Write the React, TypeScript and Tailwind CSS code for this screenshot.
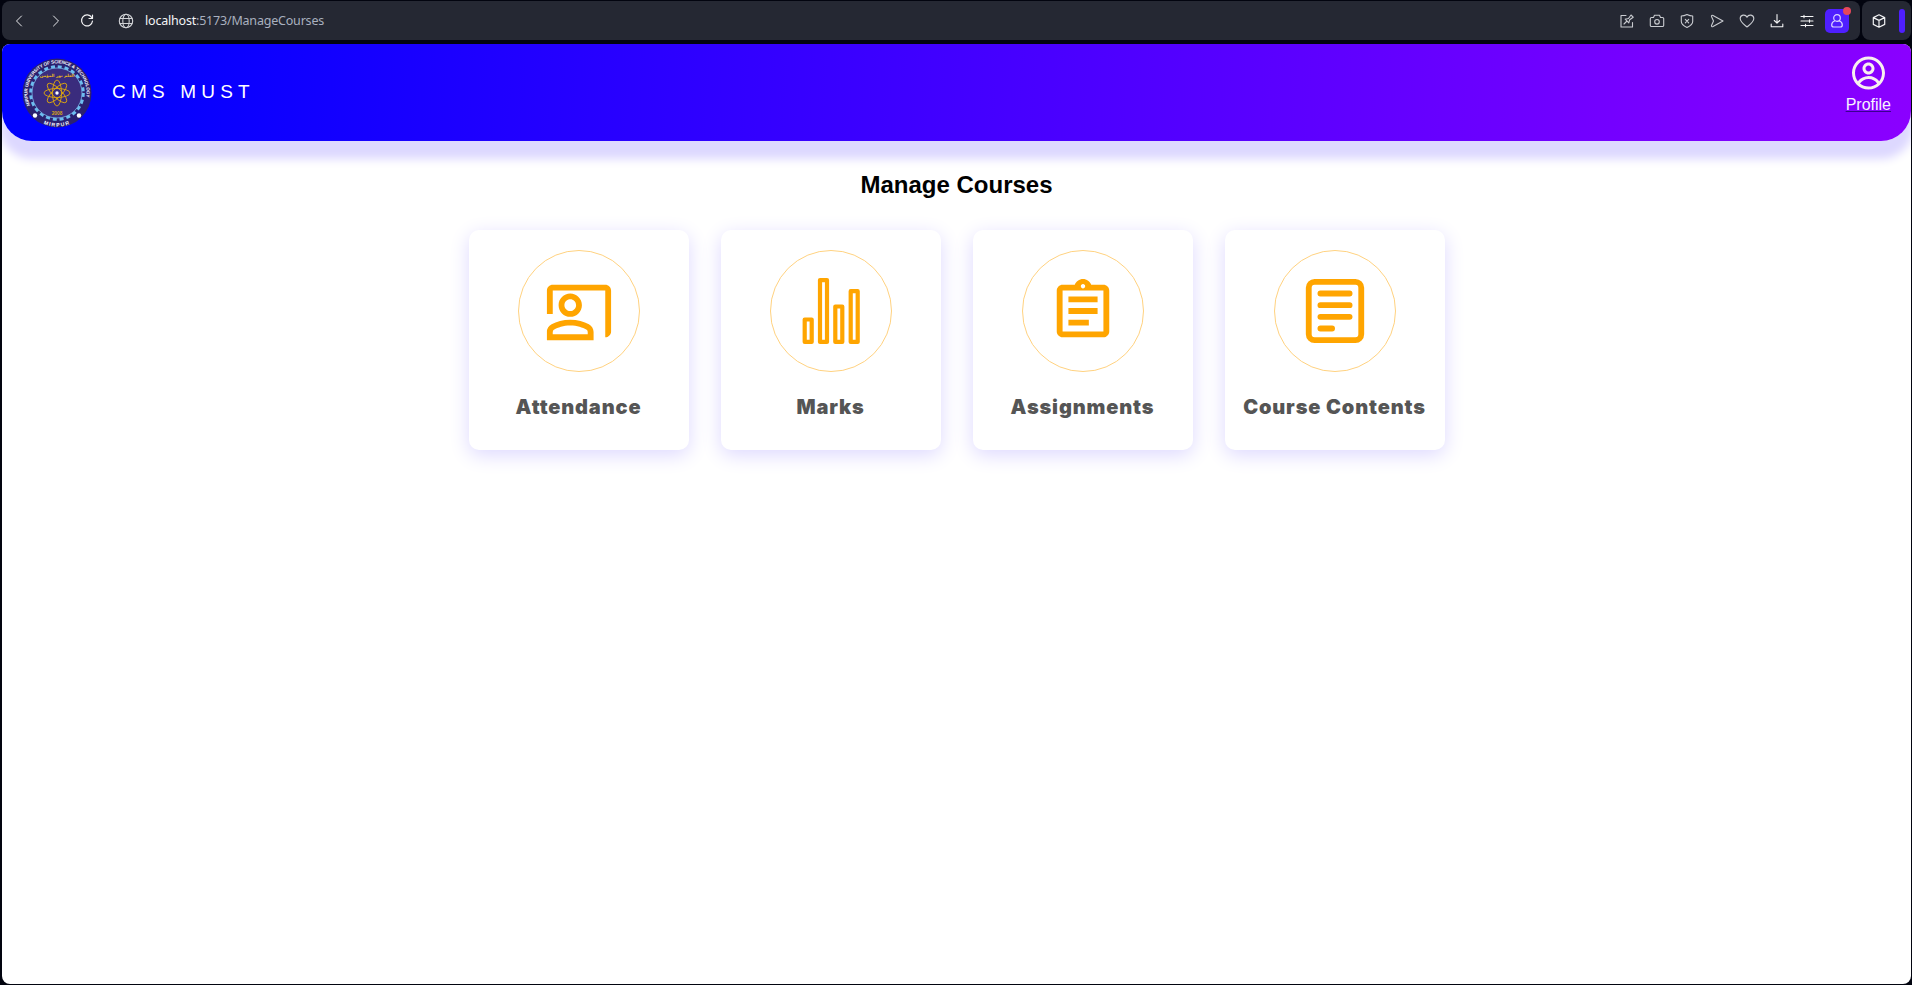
import React from "react";
import { MdOutlineCoPresent, MdOutlineAssignment } from "react-icons/md";
import { CgProfile } from "react-icons/cg";

const stroke = { fill: "none", stroke: "currentColor", strokeLinecap: "round", strokeLinejoin: "round" } as const;

function BarsIcon() {
  return (
    <svg viewBox="0 0 70 70" className="size-[70px]" fill="none" stroke="currentColor" strokeWidth="4.2" strokeLinejoin="round">
      <rect x="8.700" y="43.500" width="7" height="22.400" />
      <rect x="24" y="4.100" width="7" height="61.800" />
      <rect x="39.300" y="30.500" width="7" height="35.400" />
      <rect x="54.700" y="15.200" width="7" height="50.700" />
    </svg>
  );
}

function NotesIcon() {
  return (
    <svg viewBox="0 0 24 24" className="size-[70px]" {...stroke} strokeWidth="2">
      <rect x="3" y="2" width="18" height="20" rx="2" />
      <path d="M7 6h10M7 10h10M7 14h10M7 18h4" />
    </svg>
  );
}

const cards = [
  { label: "Attendance", icon: <MdOutlineCoPresent size={70} /> },
  { label: "Marks", icon: <BarsIcon /> },
  { label: "Assignments", icon: <MdOutlineAssignment size={70} /> },
  { label: "Course Contents", icon: <NotesIcon /> },
];

const toolIcons: { name: string; bright?: boolean; body: React.ReactNode }[] = [
  { name: "edit", body: <path d="M7 2.500H2v11.500h11.500V9.500M5 11l2.500-2.500M6.200 6.200l3.600 3.600M6.200 6.200l3.300-.7 2.500-3.500 2.200 2.200-3.500 2.500-.9 3.100" /> },
  { name: "camera", body: <><path d="M2.500 4.500H4.500L5.500 2.300h5L11.500 4.500h2a1.200 1.200 0 0 1 1.200 1.200V12.300a1.200 1.200 0 0 1-1.200 1.200H2.500A1.200 1.200 0 0 1 1.300 12.300V5.700a1.200 1.200 0 0 1 1.200-1.200z" /><circle cx="8" cy="8.800" r="2.300" /></> },
  { name: "shield", body: <path d="M8 1.500C10 2.500 11.800 3 13.700 3v5.500c0 2.800-2.500 4.500-5.700 6-3.200-1.500-5.700-3.200-5.700-6V3C4.200 3 6 2.500 8 1.500zM6.300 6.400l3.400 3.400M9.700 6.400L6.300 9.800" /> },
  { name: "send", body: <path d="M2.500 3.500C2.200 2.300 3 2 4 2.500L14 8 4 13.500c-1 .5-1.800.2-1.500-1L4.500 8z" /> },
  { name: "heart", body: <path d="M8 14C5 11.500 1.200 9 1.200 5.500 1.200 1.500 6.500 1 8 4.200 9.500 1 14.800 1.500 14.800 5.500 14.800 9 11 11.500 8 14z" /> },
  { name: "download", bright: true, body: <path d="M8 1.500v8.500M5.300 7.500L8 10.200l2.700-2.700M2.200 11v2.700h11.600V11" /> },
  { name: "sliders", bright: true, body: <path d="M2 3.500h12M2 8h12M2 12.500h12M5 2.300v2.400M10.500 6.800v2.400M6.500 11.300v2.400" /> },
];

function Logo() {
  return (
    <svg viewBox="0 0 70 70" className="size-[70px]">
      <defs>
        <path id="arcTop" d="M 8.200 47.500 A 29.600 29.600 0 1 1 61.800 47.500" />
        <path id="arcBottom" d="M 14 61.200 A 33.300 33.300 0 0 0 56 61.200" />
      </defs>
      <circle cx="35" cy="35" r="34.500" fill="#2b2170" />
      <circle cx="35" cy="35" r="26.300" fill="none" stroke="#6cbdf0" strokeWidth="3" strokeDasharray="4 2.885" />
      <circle cx="35" cy="35" r="25" fill="#3a2c7d" stroke="#79b8e8" strokeWidth="0.8" />
      <text fill="#f4f4ff" fontFamily="Liberation Sans, sans-serif" fontWeight="700" fontSize="4.600" letterSpacing="-0.120">
        <textPath href="#arcTop">MIRPUR UNIVERSITY OF SCIENCE &amp; TECHNOLOGY</textPath>
      </text>
      <text fill="#f4f4ff" fontFamily="Liberation Sans, sans-serif" fontWeight="700" fontSize="5.200" textAnchor="middle" letterSpacing="1.200">
        <textPath href="#arcBottom" startOffset="50%">MIRPUR</textPath>
      </text>
      <text x="35" y="19" fill="#e8b81e" fontFamily="DejaVu Sans, sans-serif" fontWeight="700" fontSize="4.200" textAnchor="middle">العلم نور المؤمن</text>
      <g fill="none" stroke="#e0a80c" strokeWidth="0.9">
        <ellipse cx="35" cy="35" rx="13" ry="4.500" />
        <ellipse cx="35" cy="35" rx="13" ry="4.500" transform="rotate(45 35 35)" />
        <ellipse cx="35" cy="35" rx="13" ry="4.500" transform="rotate(90 35 35)" />
        <ellipse cx="35" cy="35" rx="13" ry="4.500" transform="rotate(135 35 35)" />
      </g>
      <circle cx="35" cy="35" r="1.700" fill="#fff" />
      <text x="35" y="57" fill="#d9a514" fontFamily="Liberation Sans, sans-serif" fontWeight="700" fontSize="4.800" textAnchor="middle">2008</text>
      <circle cx="13" cy="57.500" r="2.200" fill="#fff" />
      <circle cx="57" cy="57.500" r="2.200" fill="#fff" />
    </svg>
  );
}

export default function App() {
  return (
    <div className="flex h-[985px] w-[1912px] flex-col overflow-hidden bg-[#02040f] pl-[2px] pr-px pt-px pb-px font-['Liberation_Sans',Arial,sans-serif]">
      <div className="flex h-[39px] shrink-0 gap-[2px]">
        <div className="flex w-[1858px] items-center rounded-lg bg-[#252833] pr-[11px]">
          <svg viewBox="0 0 16 16" className="ml-[9px] size-4 text-[#e8e9ec]" {...stroke} strokeWidth="1"><path d="M10.500 3l-5 5 5 5" /></svg>
          <svg viewBox="0 0 16 16" className="ml-[21px] size-4 text-[#e8e9ec]" {...stroke} strokeWidth="1"><path d="M5.500 3l5 5-5 5" /></svg>
          <svg viewBox="0 0 16 16" className="ml-[15px] size-4 text-[#f2f2f4]" {...stroke} strokeWidth="1.200"><path d="M12.700 4.500A5.500 5.500 0 1 0 13.500 8M13.500 2v3.500H10" /></svg>
          <svg viewBox="0 0 16 16" className="ml-[23px] size-4 text-[#d0d2d6]" {...stroke} strokeWidth="1.100"><circle cx="8" cy="8" r="6.700" /><ellipse cx="8" cy="8" rx="3.200" ry="6.700" /><path d="M2 5.500h12M2 10.500h12" /></svg>
          <div className="ml-[11px] font-['Noto_Sans',sans-serif] text-[12.500px] leading-4 tracking-[-0.200px] text-[#a9b0bf]">
            <span className="text-[#f3f4f6]">localhost</span>:5173/ManageCourses
          </div>
          <div className="ml-auto flex items-center gap-[14px] text-[#c9cbd0]">
            {toolIcons.map((t) => (
              <svg key={t.name} viewBox="0 0 16 16" className={t.bright ? "size-4 text-[#f5f5f6]" : "size-4"} {...stroke} strokeWidth="1.100">{t.body}</svg>
            ))}
            <div className="relative -ml-[4px] flex size-6 items-center justify-center rounded-[5px] bg-[#4f1fff] text-[#dcd5ff]">
              <svg viewBox="0 0 16 16" className="size-4" {...stroke} strokeWidth="1.200"><circle cx="8" cy="5" r="3.300" /><path d="M5.500 8C3 9 2.700 10.500 2.700 12c0 1.300.8 2 2 2h6.600c1.200 0 2-.7 2-2 0-1.500-.3-3-2.800-4" /></svg>
              <div className="absolute -right-[2px] -top-[2px] size-2 rounded-full bg-[#e5485a]" />
            </div>
          </div>
        </div>
        <div className="flex w-[49px] items-center rounded-lg bg-[#252833] pl-[9px]">
          <svg viewBox="0 0 16 16" className="size-4 text-[#f2f2f4]" {...stroke} strokeWidth="1.200"><path d="M8 1.800l5.700 2.800v6.800L8 14.200l-5.700-2.800V4.600zM2.300 4.600L8 7.400l5.700-2.800M8 7.400v6.800" /></svg>
          <div className="ml-[12px] h-6 w-[6px] rounded-full bg-[#4f1fff]" />
        </div>
      </div>

      <div className="mt-1 flex flex-1 flex-col overflow-hidden rounded-lg bg-white">
        <header className="flex h-[97px] shrink-0 justify-between rounded-b-[30px] bg-[linear-gradient(94deg,#0000ff_5%,#8b00ff_100%)] pl-[20px] pr-[20px] shadow-[0_15px_10px_3px_#ddd8ff]">
          <div className="flex items-center">
            <Logo />
            <div className="ml-[20px] text-[19px] tracking-[5.200px] text-white">CMS MUST</div>
          </div>
          <div className="flex flex-col items-center pt-[10.500px] text-[#f8efef]">
            <CgProfile size={36} className="translate-x-[0.5px]" />
            <span className="mt-[4.500px] text-base leading-5 text-[#f8f2ff] underline decoration-[#3a0090] decoration-1 underline-offset-1">Profile</span>
          </div>
        </header>

        <h1 className="mt-[30px] text-center text-2xl font-bold leading-7 text-black">Manage Courses</h1>

        <div className="mt-[31px] flex justify-center gap-8">
          {cards.map((c) => (
            <div key={c.label} className="flex size-[220px] flex-col items-center rounded-[10px] bg-white pt-5 shadow-[0_5px_20px_#ddd8ff]">
              <div className="flex size-[122px] items-center justify-center rounded-full border border-[#ffd280] text-[#ffa500]">{c.icon}</div>
              <div className="mt-[21px] whitespace-nowrap font-[Inter,sans-serif] text-[20px] font-black leading-7 tracking-[0.850px] text-[#555]">{c.label}</div>
            </div>
          ))}
        </div>
      </div>
    </div>
  );
}
